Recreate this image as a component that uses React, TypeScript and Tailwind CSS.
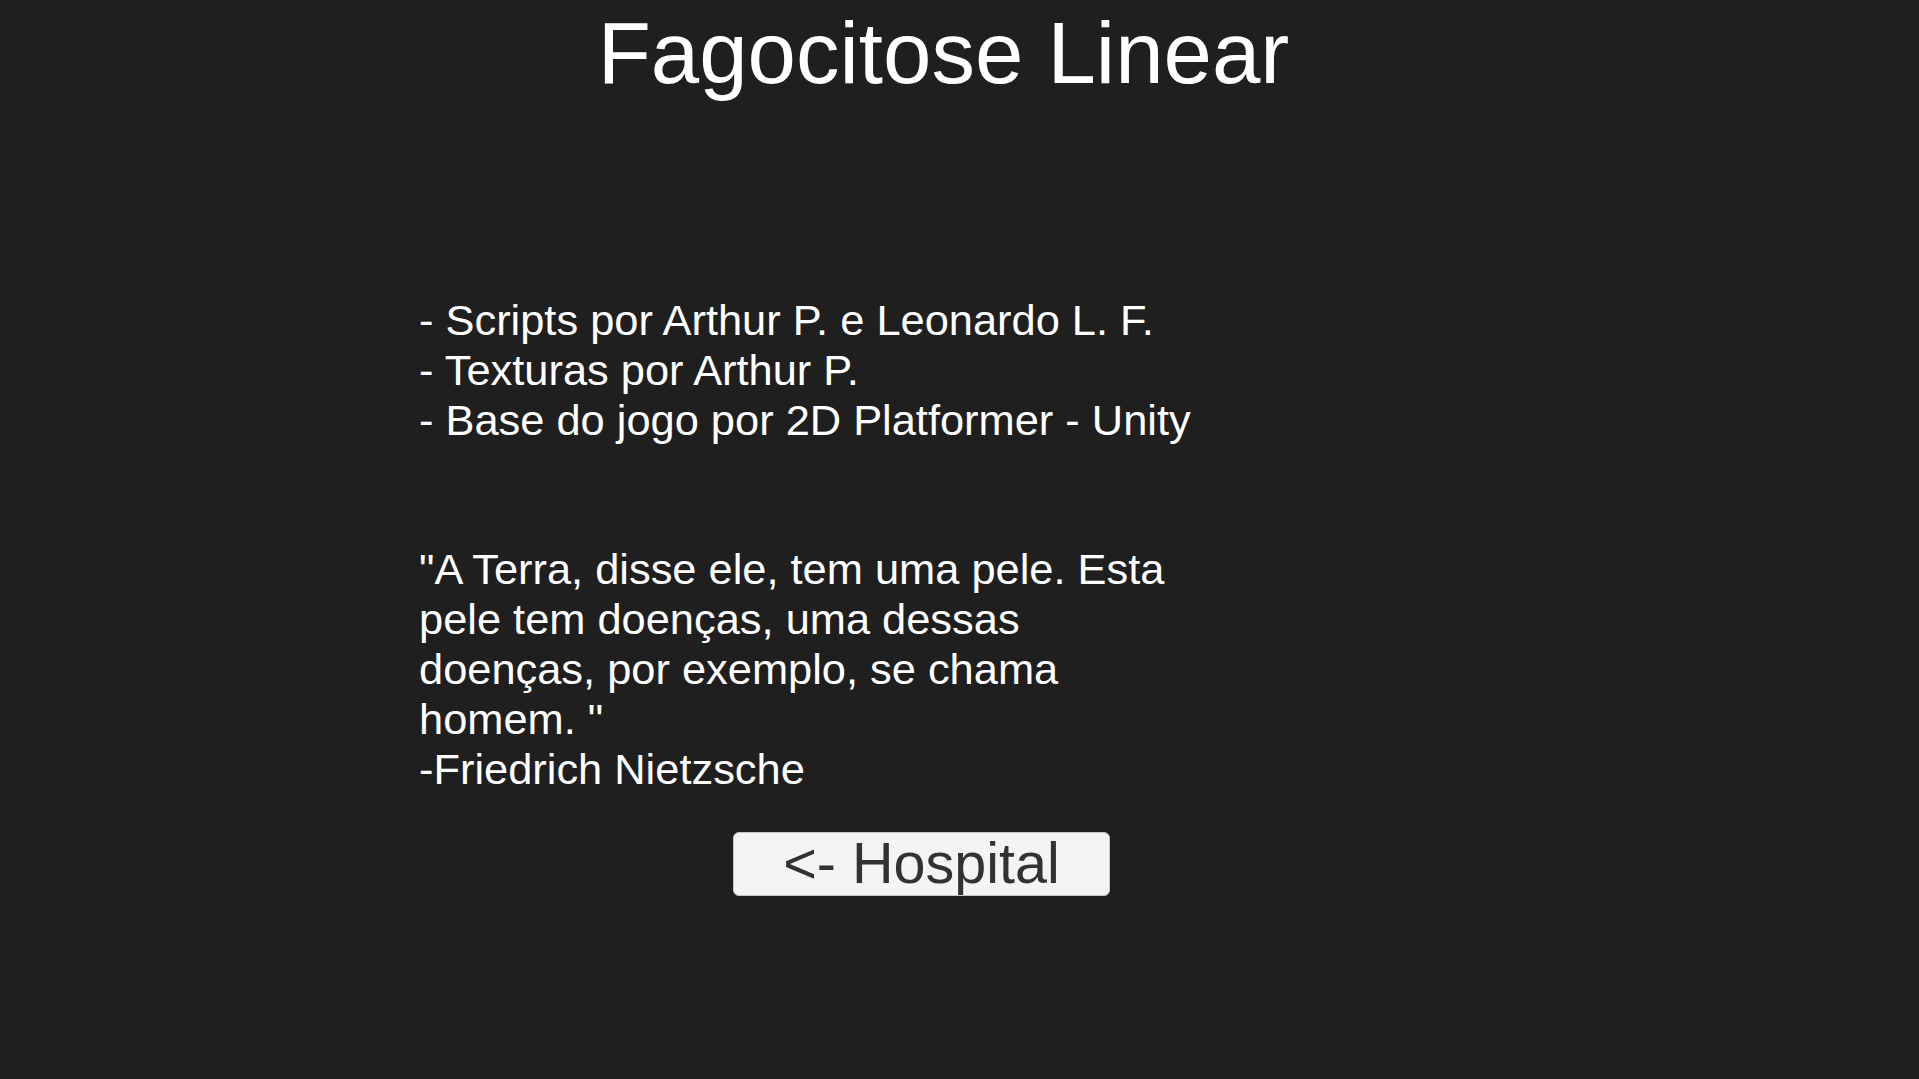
export default function App() {
  const credits = [
    "- Scripts por Arthur P. e Leonardo L. F.",
    "- Texturas por Arthur P.",
    "- Base do jogo por 2D Platformer - Unity",
  ]

  return (
    <div className="w-full h-[1079px] bg-[#1f1f1f] overflow-hidden font-['Liberation_Sans',Arial,sans-serif]">
      <h1 className="pt-[9px] pr-[32px] text-center text-white text-[87px] leading-none font-normal">
        Fagocitose Linear
      </h1>
      <div className="pl-[419px] mt-[199px]">
        <ul className="w-[775px] text-white text-[43.4px] leading-[50px]">
          {credits.map((line, index) => (
            <li key={index} className="whitespace-nowrap">
              {line}
            </li>
          ))}
        </ul>
        <p className="w-[775px] mt-[99px] text-white text-[43.4px] leading-[50px]">
          "A Terra, disse ele, tem uma pele. Esta pele tem doenças, uma dessas
          doenças, por exemplo, se chama homem. "
          <br />
          -Friedrich Nietzsche
        </p>
      </div>
      <div className="pl-[733px] mt-[38px]">
        <button className="w-[377px] h-[64px] flex items-center justify-center bg-[#f4f4f4] border border-[#c4c4c4] rounded-[6px] text-[#323232] text-[57.5px] leading-none">
          &lt;- Hospital
        </button>
      </div>
    </div>
  )
}
